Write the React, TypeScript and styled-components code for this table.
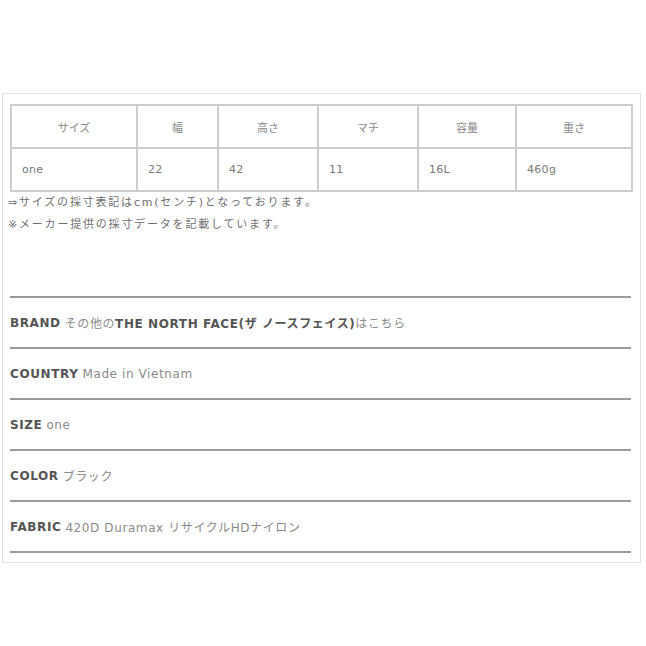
import styled, { createGlobalStyle } from "styled-components";

const GlobalStyle = createGlobalStyle`
  html, body {
    margin: 0;
    padding: 0;
    background: #ffffff;
  }
  body {
    font-family: "DejaVu Sans", "Noto Sans CJK JP", sans-serif;
  }
`;

const columns = [
  { head: "サイズ", value: "one", width: 126 },
  { head: "幅", value: "22", width: 81 },
  { head: "高さ", value: "42", width: 100 },
  { head: "マチ", value: "11", width: 100 },
  { head: "容量", value: "16L", width: 98 },
  { head: "重さ", value: "460g", width: 116 },
];

export default function App() {
  return (
    <>
      <GlobalStyle />
      <Frame>
        <SizeTable>
          <colgroup>
            {columns.map((c) => (
              <col key={c.head} style={{ width: c.width }} />
            ))}
          </colgroup>
          <tbody>
            <tr>
              {columns.map((c) => (
                <HeadCell key={c.head}>{c.head}</HeadCell>
              ))}
            </tr>
            <tr>
              {columns.map((c) => (
                <DataCell key={c.head}>{c.value}</DataCell>
              ))}
            </tr>
          </tbody>
        </SizeTable>

        <Notes>
          <p>⇒サイズの採寸表記はcm(センチ)となっております。</p>
          <p>※メーカー提供の採寸データを記載しています。</p>
        </Notes>

        <SpecList>
          <SpecRow>
            <Label>BRAND</Label>
            <Value>
              その他の<Strong>THE NORTH FACE(ザ ノースフェイス)</Strong>はこちら
            </Value>
          </SpecRow>
          <SpecRow>
            <Label>COUNTRY</Label>
            <Value>Made in Vietnam</Value>
          </SpecRow>
          <SpecRow>
            <Label>SIZE</Label>
            <Value>one</Value>
          </SpecRow>
          <SpecRow>
            <Label>COLOR</Label>
            <Value>ブラック</Value>
          </SpecRow>
          <SpecRow>
            <Label>FABRIC</Label>
            <Value>420D Duramax リサイクルHDナイロン</Value>
          </SpecRow>
        </SpecList>
      </Frame>
    </>
  );
}

const Frame = styled.div`
  box-sizing: border-box;
  margin: 93px 0 0 2px;
  width: 639px;
  height: 470px;
  border: 1px solid #e2e2e2;
  padding: 10px 9px 0 6px;
`;

const SizeTable = styled.table`
  width: 621px;
  border-collapse: collapse;
  table-layout: fixed;
  margin-left: 1px;
`;

const HeadCell = styled.td`
  height: 41px;
  padding: 0;
  border: 2px solid #cdcdcd;
  text-align: center;
  font-size: 11px;
  color: #8a8a8a;
`;

const DataCell = styled.td`
  height: 41px;
  padding: 0 0 0 10px;
  border: 2px solid #cdcdcd;
  font-size: 11px;
  color: #7a7a7a;
  letter-spacing: 0.3px;
`;

const Notes = styled.div`
  margin-left: -1px;
  p {
    margin: 0;
    line-height: 22px;
    font-size: 11px;
    letter-spacing: 1.8px;
    color: #707070;
  }
`;

const SpecList = styled.ul`
  list-style: none;
  margin: 60px 0 0 1px;
  padding: 0;
  width: 621px;
  border-top: 2px solid #9c9c9c;
`;

const SpecRow = styled.li`
  display: flex;
  align-items: center;
  gap: 4px;
  height: 49px;
  border-bottom: 2px solid #9c9c9c;
  font-size: 12px;
`;

const Label = styled.span`
  font-weight: bold;
  color: #555555;
  letter-spacing: 0.6px;
`;

const Value = styled.span`
  color: #8c8c8c;
  letter-spacing: 0.6px;
`;

const Strong = styled.b`
  color: #555555;
  letter-spacing: 0.6px;
`;
